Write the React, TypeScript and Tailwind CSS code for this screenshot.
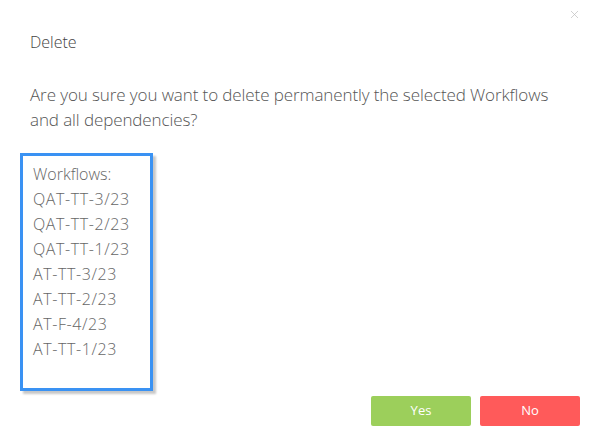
import { X } from "lucide-react";

const workflows = ["QAT-TT-3/23", "QAT-TT-2/23", "QAT-TT-1/23", "AT-TT-3/23", "AT-TT-2/23", "AT-F-4/23", "AT-TT-1/23"];

export default function App() {
  return (
    <div className="w-[593px] h-[440px] bg-white relative text-[#555] font-['Open_Sans',sans-serif] font-light">
      <button className="absolute top-[8px] right-[12px] text-[#bdbdbd]" aria-label="Close">
        <X className="w-[13px] h-[13px]" strokeWidth={1.3} />
      </button>

      <div className="pl-[30px] pr-[20px] pt-[31px]">
        <h2 className="text-[16px] leading-[22px] text-[#444]">Delete</h2>

        <p className="mt-[29px] text-[17px] leading-[25px] text-[#555] tracking-[-0.1px]">
          Are you sure you want to delete permanently the selected Workflows and all dependencies?
        </p>
      </div>

      <div className="ml-[20px] mt-[21px] w-[133px] h-[238px] border-[3px] border-[#3a92f3] shadow-[3px_3px_2px_rgba(0,0,0,0.22)] pl-[10px] pt-[6px]">
        <div className="text-[16px] leading-[25px] text-[#666]">
          <div>Workflows:</div>
          {workflows.map((w) => (
            <div key={w} className="tracking-[0.6px]">{w}</div>
          ))}
        </div>
      </div>

      <div className="flex justify-end gap-[9px] pr-[13px] mt-[5px]">
        <button className="w-[100px] h-[30px] rounded-[2px] bg-[#9ccf5b] text-white text-[13px] font-normal">Yes</button>
        <button className="w-[100px] h-[30px] rounded-[2px] bg-[#ff5a5a] text-white text-[13px] font-normal">No</button>
      </div>
    </div>
  );
}
